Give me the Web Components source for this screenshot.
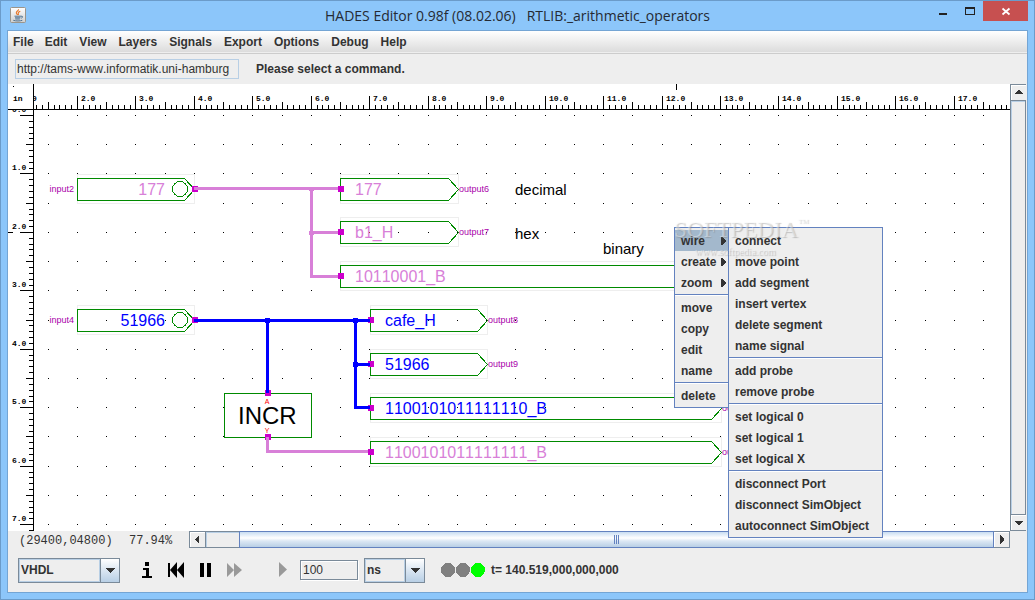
<!DOCTYPE html>
<html lang="en">
<head>
<meta charset="utf-8">
<title>HADES Editor</title>
<style>
  html, body { margin: 0; height: 100%; }
  body { overflow: hidden; font: 12px/16px "Liberation Sans", Arial, sans-serif; font-kerning: none; color: #333; }
</style>
</head>
<body>
<hades-window caption="HADES Editor 0.98f (08.02.06)   RTLIB:_arithmetic_operators">
  <menu-bar items="File,Edit,View,Layers,Signals,Export,Options,Debug,Help"></menu-bar>
  <command-bar url="http://tams-www.informatik.uni-hamburg">Please select a command.</command-bar>
  <editor-pane></editor-pane>
  <simulation-bar time="t= 140.519,000,000,000"></simulation-bar>
  <popup-group slot="popup">
    <popup-menu label="Edit commands">
      <menu-entry submenu selected>wire</menu-entry>
      <menu-entry submenu>create</menu-entry>
      <menu-entry submenu>zoom</menu-entry>
      <menu-rule></menu-rule>
      <menu-entry>move</menu-entry>
      <menu-entry>copy</menu-entry>
      <menu-entry>edit</menu-entry>
      <menu-entry>name</menu-entry>
      <menu-rule></menu-rule>
      <menu-entry>delete</menu-entry>
    </popup-menu>
    <popup-menu label="Wire commands" wide>
      <menu-entry>connect</menu-entry>
      <menu-entry>move point</menu-entry>
      <menu-entry>add segment</menu-entry>
      <menu-entry>insert vertex</menu-entry>
      <menu-entry>delete segment</menu-entry>
      <menu-entry>name signal</menu-entry>
      <menu-rule></menu-rule>
      <menu-entry>add probe</menu-entry>
      <menu-entry>remove probe</menu-entry>
      <menu-rule></menu-rule>
      <menu-entry>set logical 0</menu-entry>
      <menu-entry>set logical 1</menu-entry>
      <menu-entry>set logical X</menu-entry>
      <menu-rule></menu-rule>
      <menu-entry>disconnect Port</menu-entry>
      <menu-entry>disconnect SimObject</menu-entry>
      <menu-entry>autoconnect SimObject</menu-entry>
    </popup-menu>
  </popup-group>
  <water-mark slot="popup"></water-mark>
</hades-window>

<script>
const define = (name, render, ready) => customElements.define(name, class extends HTMLElement {
  connectedCallback() {
    if (this.shadowRoot) return;
    this.attachShadow({ mode: 'open' }).innerHTML = render(this);
    if (ready) ready(this);
  }
});

/* Window frame with title bar */
define('hades-window', el => `
<style>
  :host { display: flex; flex-direction: column; position: relative; height: 100vh; box-sizing: border-box;
    background: #8cc6fa; border: 1px solid #6b9bc9; }
  header { display: grid; grid-template-columns: 1fr auto 1fr; align-items: start; height: 29px; flex: none; }
  .logo { margin: 6px 0 0 9px; display: block; }
  h1 { margin: 5px 0 0; font: 14px/20px "Open Sans", "Noto Sans", sans-serif; color: #252a33; white-space: pre; }
  .buttons { display: flex; justify-content: flex-end; padding-right: 6px; }
  button { border: 0; padding: 0; background: none; height: 20px; width: 28px; display: block; }
  button.close { width: 45px; background: #c75050; }
  svg { display: block; }
  main { flex: 1; min-height: 0; display: flex; flex-direction: column; margin: 0 6px 6px 6px;
    background: #eee; border: 1px solid #74a5d4; }
</style>
<header>
  <svg class="logo" width="16" height="16" viewBox="0 0 16 16" aria-label="Java">
    <defs><linearGradient id="t" x2="0" y2="1"><stop stop-color="#fff"/><stop offset="1" stop-color="#cfcfcf"/></linearGradient></defs>
    <rect x=".5" y=".5" width="15" height="15" rx="1" fill="url(#t)" stroke="#9a958c"/>
    <path d="M8.5 2.2C9 3.6 6 4.400 6.300 5.800C6.500 6.700 7.300 7.200 7.600 8M10.300 4.300C8.800 4.900 8 5.600 8.300 6.400C8.600 7 8.700 7.300 8.200 8" fill="none" stroke="#e8782a" stroke-width="1.100"/>
    <path d="M4.500 9.200h6.500M5 10.800h5.500M5.300 12h4.500M11 9.300c2-.6 2.300 1.200.2 1.900M3.300 13.300c2.500.9 7 .8 9 0" fill="none" stroke="#4f7393" stroke-width="1"/>
  </svg>
  <h1>${el.getAttribute('caption')}</h1>
  <div class="buttons">
    <button aria-label="Minimize"><svg width="28" height="20"><rect x="12" y="12" width="8" height="2" fill="#222"/></svg></button>
    <button aria-label="Maximize"><svg width="28" height="20"><path d="M10 6h10v8H10zM11 8v5h8V8z" fill="#222" fill-rule="evenodd"/></svg></button>
    <button class="close" aria-label="Close"><svg width="45" height="20"><path d="M19.500 7.500l7 6M26.500 7.500l-7 6" stroke="#fff" stroke-width="1.800"/></svg></button>
  </div>
</header>
<main><slot></slot></main>
<slot name="popup"></slot>`);

define('menu-bar', el => `
<style>
  :host { display: block; flex: none; background: linear-gradient(#fff, #dadada); border-bottom: 1px solid #ccc;
    box-shadow: inset 0 -1px #eee; }
  nav { display: flex; height: 22px; }
  button { border: 0; background: none; padding: 0 6px 0 5px; font: bold 12px/20px "Liberation Sans", Arial, sans-serif; color: #333; }
  button:nth-child(n+3) { padding-left: 6px; }
</style>
<nav role="menubar">${el.getAttribute('items').split(',').map(t => `<button role="menuitem">${t}</button>`).join('')}</nav>`);

define('command-bar', el => `
<style>
  :host { display: flex; align-items: center; gap: 17px; height: 30px; flex: none; padding-left: 7px; font-weight: bold; }
  input { box-sizing: border-box; width: 224px; height: 20px; border: 1px solid #b8cfe5; background: #eee;
    padding: 0 1px; font: 12px/16px "Liberation Sans", Arial, sans-serif; font-kerning: none; color: #333; outline: 0; }
</style>
<input aria-label="Design URL" value="${el.getAttribute('url')}"><span><slot></slot></span>`);

/* Canvas with its scroll bars and the coordinate read-out */
define('editor-pane', () => `
<style>
  :host { display: grid; flex: 1; min-height: 0; grid-template: minmax(0, 1fr) 17px / minmax(0, 1fr) 17px; }
  .status { display: flex; font: 12px/20px "Liberation Mono", "Courier New", monospace; color: #333; min-width: 0; }
  .status span { flex: none; box-sizing: border-box; }
  .position { padding-left: 11px; width: 121px; }
  .zoom { width: 60px; }
  scroll-bar[horizontal] { flex: 1; }
</style>
<schematic-canvas></schematic-canvas>
<scroll-bar></scroll-bar>
<div class="status"><span class="position">(29400,04800)</span><span class="zoom">77.94%</span><scroll-bar horizontal></scroll-bar></div>`);

define('scroll-bar', el => {
  const h = el.hasAttribute('horizontal');
  const arrow = d => `<svg width="9" height="9" viewBox="0 0 9 9" shape-rendering="crispEdges"><path d="${d}" fill="#333"/></svg>`;
  return `
<style>
  :host { display: flex; flex-direction: ${h ? 'row' : 'column'}; box-sizing: border-box; background: #eee;
    border: 1px solid #7a8a99; min-width: 0; }
  :host(:not([horizontal])) { margin-right: 1px; box-shadow: inset 1px 0 #b8cfe5; }
  button { flex: none; width: 15px; height: 15px; padding: 0; border: 0; display: flex; align-items: center;
    justify-content: center; background: #eee; box-shadow: inset 1px 1px #fff; }
  .track { flex: 1; display: flex; min-width: 0; border: 0 solid #7a8a99; border-width: ${h ? '0 0 0 1px' : '1px 0'};
    box-shadow: inset 1px 1px #b8cfe5; }
  .thumb { flex: 1; margin: -1px 0 -1px 33px; border: 1px solid #6382bf; display: flex; align-items: center; justify-content: center;
    background: linear-gradient(#c8ddf2, #fff 40%, #dce8f4 60%, #b8cfe5); }
</style>
<button aria-label="${h ? 'Scroll left' : 'Scroll up'}">${h ? arrow('M6 0v9L2 5V4z') : arrow('M0 6h9L5 2H4z')}</button>
<div class="track">${h ? `<div class="thumb"><svg width="6" height="9" shape-rendering="crispEdges"><path d="M.5 0v9M2.500 0v9M4.500 0v9" stroke="#6382bf"/></svg></div>` : ''}</div>
<button aria-label="${h ? 'Scroll right' : 'Scroll down'}">${h ? arrow('M3 0v9L7 5V4z') : arrow('M0 3h9L5 7H4z')}</button>`;
});

/* Rulers, grid and circuit; drawing units are window pixels, the view starts at (8, 84) */
const UNIT = 58.45, X0 = 77 - 2 * UNIT, Y0 = 115, COLS = 60, ROWS = 40;
const gx = n => Math.round(X0 + n * UNIT), gy = n => Math.round(Y0 + n * UNIT);

define('schematic-canvas', () => {
  const PINK = '#d880d8', BLUE = '#0000ff';
  let dots = '', ticks = '';
  for (let i = 3; i < COLS * 2; i++)
    for (let j = 0; j < ROWS * 2; j++) dots += `M${gx(i / 2)} ${gy(j / 2)}h1v1h-1z`;
  for (let i = 13; i < COLS * 10; i++) {
    const top = i % 10 === 0 ? 96 : i % 5 === 0 ? 102 : 105;
    ticks += `M${gx(i / 10)} ${top}h1V109h-1z`;
  }
  for (let j = 0; j < ROWS * 10; j++) {
    const left = j % 10 === 0 ? 20 : j % 5 === 0 ? 26 : 29;
    ticks += `M${left} ${gy(j / 10)}V${gy(j / 10) + 1}H33v-1z`;
  }

  const pin = (x, y) => `<rect x="${x - 3}" y="${y - 3}" width="6" height="6" fill="#cc00cc"/>`;
  const port = (x, y, w, value, color, name, input) => {
    const tip = x + w;
    return `<rect x="${x}.5" y="${y - 15}.5" width="${w}" height="29" fill="none" stroke="#eee"/>
      <path d="M${x}.5 ${y - 11}.5H${tip - 10}.5L${tip}.5 ${y}.5L${tip - 10}.5 ${y + 11}.5H${x}.5z" fill="none" stroke="#008a00"/>
      ${input ? `<circle cx="180" cy="${y}" r="7.500" fill="none" stroke="#008a00"/>` : ''}
      <text class="value" x="${input ? 165 : x + 15}" y="${y + 6}" fill="${color}" ${input ? 'text-anchor="end"' : ''}>${value}</text>
      <text class="name" x="${input ? 74 : tip + 1}" y="${y + 3}" ${input ? 'text-anchor="end"' : ''}>${name}</text>
      ${input ? '' : pin(x + 1, y)}`;
  };
  return `
<style>
  :host { display: block; min-width: 0; min-height: 0; overflow: hidden; background: #fff; }
  svg { display: block; width: 100%; height: 100%; font-family: "Liberation Sans", Arial, sans-serif; font-kerning: none; }
  .crisp { shape-rendering: crispEdges; }
  .ruler { font: bold 8px "Liberation Mono", monospace; }
  .value { font-size: 16px; }
  .note { font-size: 15px; fill: #000; }
  .name { font-size: 9px; fill: #aa00aa; }
  .pinname { font-size: 7px; fill: #f00; }
  .block { font-size: 24px; fill: #000; }
</style>
<svg aria-label="Schematic"><g transform="translate(-8 -84)">
  <g class="crisp">
    <path d="${dots}"/>
    ${port(77, 189, 117, '177', PINK, 'input2', true)}
    ${port(340, 189, 118, '177', PINK, 'output6')}
    ${port(340, 232, 118, 'b1_H', PINK, 'output7')}
    ${port(340, 276, 351, '10110001_B', PINK, '')}
    ${port(77, 320, 117, '51966', BLUE, 'input4', true)}
    ${port(370, 320, 117, 'cafe_H', BLUE, 'output8')}
    ${port(370, 364, 117, '51966', BLUE, 'output9')}
    ${port(370, 408, 351, '1100101011111110_B', BLUE, 'output10')}
    ${port(370, 452, 351, '1100101011111111_B', PINK, 'output11')}
    <rect x="224.500" y="393.500" width="87" height="44" fill="#fff" stroke="#008a00"/>
    ${pin(195, 189)}${pin(195, 320)}${pin(268, 393)}${pin(268, 437)}
    <g fill="none" stroke="${PINK}" stroke-width="3">
      <path d="M194 188.500H338M311.500 188.500V278M311.500 232.500H338M311.500 276.500H338M267.500 437V451.500H368"/>
    </g>
    <path d="M309 187h5v4h-5zM309 231h5v4h-5z" fill="${PINK}"/>
    <g fill="none" stroke="${BLUE}" stroke-width="3">
      <path d="M194 320.500H370M267.500 320.500V393M355.500 320.500V409M355.500 364.500H370M355.500 407.500H370"/>
    </g>
    <path d="M265 318h5v5h-5zM353 318h5v5h-5zM353 362h5v5h-5z" fill="${BLUE}"/>
  </g>
  <text class="block" x="238" y="424">INCR</text>
  <text class="pinname" x="267" y="404" text-anchor="middle">A</text>
  <text class="pinname" x="267" y="433" text-anchor="middle">Y</text>
  <text class="note" x="515" y="195">decimal</text>
  <text class="note" x="515" y="239">hex</text>
  <text class="note" x="603" y="254">binary</text>
  <g class="crisp">
    <path d="${ticks}M8 109H4000v1H8zM33 84h1V3000h-1zM676 84h1v6h-1zM8 232h5v1H8zM13 86h1v1h-1z"/>
    <g class="ruler"><g id="marks"></g><text x="13" y="101">in</text></g>
    <svg x="34" y="84" width="20" height="24" overflow="hidden"><text class="ruler" x="-2" y="17">0</text></svg>
    <svg x="8" y="110" width="25" height="10" overflow="hidden"><text class="ruler" x="4" y="2">0.0</text></svg>
  </g>
</g></svg>`;
}, el => {
  /* Label only the ruler marks that fit in the visible part of the canvas */
  const marks = el.shadowRoot.getElementById('marks');
  new ResizeObserver(() => {
    const right = 8 + el.clientWidth, bottom = 84 + el.clientHeight;
    let out = '';
    for (let i = 2; i < COLS && gx(i) + 28 < right; i++) out += `<text x="${gx(i) + 4}" y="101">${i}.0</text>`;
    for (let j = 1; j < ROWS && gy(j) < bottom; j++) out += `<text x="12" y="${gy(j) - 3}">${j}.0</text>`;
    marks.innerHTML = out;
  }).observe(el);
});

/* Drop-down box in the Metal style */
define('combo-box', el => `
<style>
  :host { display: flex; flex: none; box-sizing: border-box; height: 25px; border: 1px solid #7a8a99; }
  select { appearance: none; flex: 1; min-width: 0; margin: 0; border: 1px solid #b8cfe5; border-radius: 0; background: #eee; outline: 0;
    padding: 0 1px; font: bold 12px/16px "Liberation Sans", Arial, sans-serif; color: #333; }
  span { width: 18px; flex: none; border-left: 1px solid #7a8a99; display: flex; align-items: center; justify-content: center;
    background: linear-gradient(#fff, #dde8f3 45%, #b8cfe5); pointer-events: none; }
</style>
<select aria-label="${el.getAttribute('label')}"><option>${el.getAttribute('value')}</option></select>
<span><svg width="10" height="5" shape-rendering="crispEdges"><path d="M0 0h10L5 5z" fill="#333"/></svg></span>`);

define('simulation-bar', el => {
  const tool = (label, w, d, fill = '#000') =>
    `<button aria-label="${label}"><svg width="${w}" height="17"><path d="${d}" fill="${fill}"/></svg></button>`;
  return `
<style>
  :host { display: flex; align-items: center; height: 44px; flex: none; padding-left: 10px; }
  combo-box.language { width: 102px; margin-right: 16px; }
  combo-box.unit { width: 61px; margin: 0 15px 0 6px; }
  .tools { display: flex; align-items: center; gap: 7px; margin-right: 6px; }
  button { width: 22px; height: 22px; padding: 0; border: 0; background: none; display: flex; align-items: center; justify-content: center; }
  button:last-child { margin-left: 20px; }
  input { box-sizing: border-box; width: 58px; height: 20px; border: 1px solid #7a8a99; box-shadow: 1px 1px #fff, inset 1px 1px #fff;
    background: #eee; padding: 0 2px; font: 12px/16px "Liberation Sans", Arial, sans-serif; color: #333; outline: 0; }
  b { margin-left: 5px; line-height: 16px; white-space: nowrap; }
</style>
<combo-box class="language" label="Language" value="VHDL"></combo-box>
<div class="tools">
  ${tool('Info', 10, 'M3 0h4v4H3zM1 6h6v8h3v2H0v-2h4V8H1z')}
  ${tool('Rewind', 16, 'M0 1h2v14H0zM2 8L9 0v16zM9 8L16 0v16z')}
  ${tool('Pause', 11, 'M0 1h4v14H0zM7 1h4v14H7z')}
  ${tool('Fast forward', 15, 'M0 1L7 8L0 15zM7 1L15 8L7 15z', '#999')}
  ${tool('Step', 8, 'M0 0L8 7.500L0 15z', '#999')}
</div>
<input aria-label="Step time" value="100">
<combo-box class="unit" label="Time unit" value="ns"></combo-box>
<svg width="46" height="16" aria-label="Simulator running" shape-rendering="crispEdges">
  <circle cx="8" cy="8" r="7" fill="#808080"/><circle cx="23" cy="8" r="7" fill="#808080"/><circle cx="38" cy="8" r="7" fill="#0f0"/>
</svg>
<b>${el.getAttribute('time')}</b>`;
});

define('popup-group', () => `
<style>:host { position: absolute; left: 673px; top: 226px; display: flex; align-items: flex-start; }</style>
<slot></slot>`);

define('popup-menu', el => `
<style>
  :host { display: block; box-sizing: border-box; width: 54px; padding: 2px 0 1px; background: #eee;
    border: 1px solid #6382bf; border-right-width: 0; }
  :host([wide]) { width: 155px; border-right-width: 1px; }
</style>
<div role="menu" aria-label="${el.getAttribute('label')}"><slot></slot></div>`);

define('menu-entry', el => `
<style>
  :host { display: block; }
  button { display: flex; align-items: center; justify-content: space-between; width: 100%; height: 21px; border: 0; margin: 0; padding: 0 2px 0 6px;
    background: none; font: bold 12px/16px "Liberation Sans", Arial, sans-serif; color: #333; text-align: left; white-space: nowrap; }
  :host([selected]) button { background: #a3b8cc; }
</style>
<button role="menuitem"><slot></slot>${el.hasAttribute('submenu') ? '<svg width="5" height="8" shape-rendering="crispEdges"><path d="M0 0h1L5 4L1 8H0z" fill="#333"/></svg>' : ''}</button>`);

define('menu-rule', () => `
<style>:host { display: block; height: 1px; margin: 1px 0 2px; background: #6382bf; box-shadow: 0 1px #fff; }</style>`);

define('water-mark', () => `
<style>
  :host { position: absolute; left: 673px; top: 216px; pointer-events: none; color: rgba(255,255,255,.4); }
  div { font-family: "Liberation Serif", serif; text-shadow: 1px 1px 1px rgba(120,120,120,.4); white-space: nowrap; }
  .big { display: flex; align-items: flex-start; font-size: 23px; line-height: 26px; }
  .big small { font-size: 7px; line-height: 8px; }
  .site { font-size: 10px; line-height: 14px; padding: 2px 0 0 21px; }
</style>
<div class="big">SOFTPEDIA<small>TM</small></div><div class="site">www.softpedia.com</div>`);
</script>
</body>
</html>
